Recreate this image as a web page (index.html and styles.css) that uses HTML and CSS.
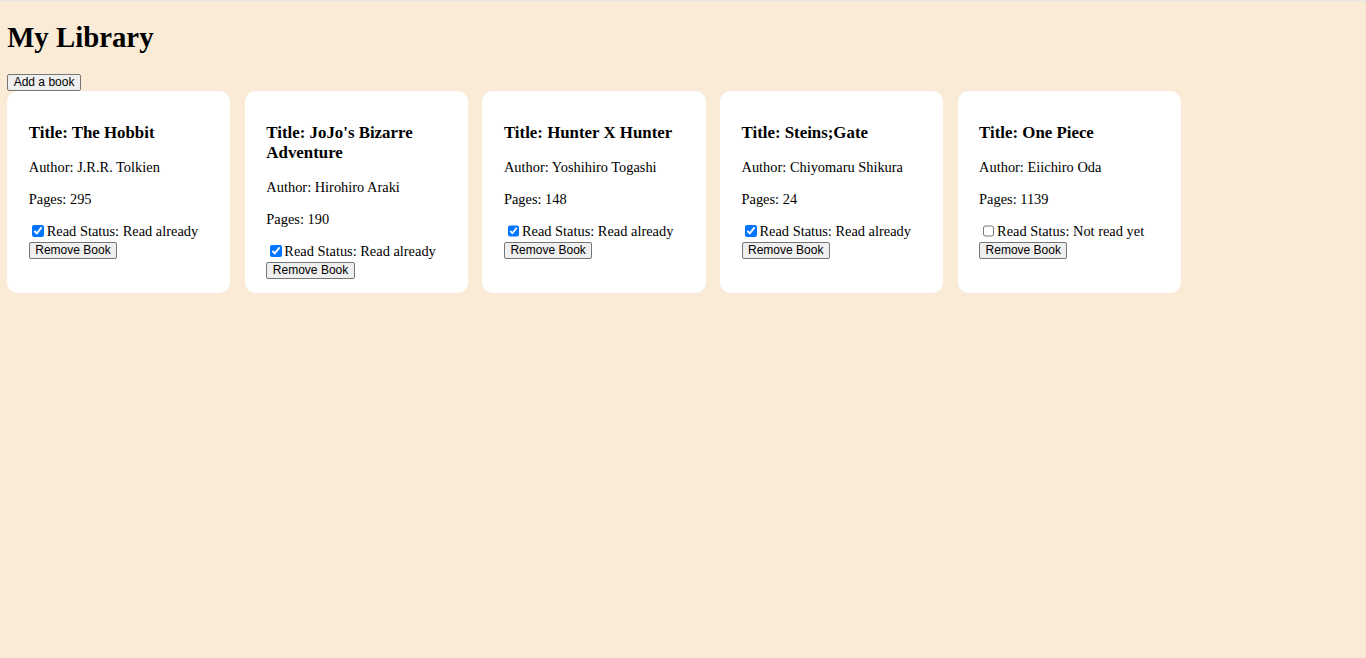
FILE: index.html
```html
<!DOCTYPE html>
<html lang="en">
<head>
<meta charset="utf-8">
<title>My Library</title>
<link rel="stylesheet" href="styles.css">
</head>
<body>
<h1 class="page-title">My Library</h1>
<div class="toolbar"><button class="btn">Add a book</button></div>
<div class="library">
  <div class="card">
    <h3 class="card-title">Title: The Hobbit</h3>
    <p class="card-line">Author: J.R.R. Tolkien</p>
    <p class="card-line">Pages: 295</p>
    <div class="read-status"><input type="checkbox" class="read-check" checked><label>Read Status: Read already</label></div>
    <button class="btn">Remove Book</button>
  </div>
  <div class="card">
    <h3 class="card-title">Title: JoJo's Bizarre Adventure</h3>
    <p class="card-line">Author: Hirohiro Araki</p>
    <p class="card-line">Pages: 190</p>
    <div class="read-status"><input type="checkbox" class="read-check" checked><label>Read Status: Read already</label></div>
    <button class="btn">Remove Book</button>
  </div>
  <div class="card">
    <h3 class="card-title">Title: Hunter X Hunter</h3>
    <p class="card-line">Author: Yoshihiro Togashi</p>
    <p class="card-line">Pages: 148</p>
    <div class="read-status"><input type="checkbox" class="read-check" checked><label>Read Status: Read already</label></div>
    <button class="btn">Remove Book</button>
  </div>
  <div class="card">
    <h3 class="card-title">Title: Steins;Gate</h3>
    <p class="card-line">Author: Chiyomaru Shikura</p>
    <p class="card-line">Pages: 24</p>
    <div class="read-status"><input type="checkbox" class="read-check" checked><label>Read Status: Read already</label></div>
    <button class="btn">Remove Book</button>
  </div>
  <div class="card">
    <h3 class="card-title">Title: One Piece</h3>
    <p class="card-line">Author: Eiichiro Oda</p>
    <p class="card-line">Pages: 1139</p>
    <div class="read-status"><input type="checkbox" class="read-check"><label>Read Status: Not read yet</label></div>
    <button class="btn">Remove Book</button>
  </div>
</div>
</body>
</html>
```

FILE: styles.css
```css
html {
  background: #faebd7;
  border-top: 1px solid #e6e6e6;
}

body {
  margin: 7.2px;
  font-family: "Liberation Serif", "Times New Roman", serif;
  font-size: 14.4px;
  color: #000;
}

.page-title {
  font-size: 28.8px;
  font-weight: bold;
  margin: 12.8px 0 19.3px;
}

.toolbar {
  line-height: 17px;
}

.btn {
  font-family: "Liberation Sans", Arial, sans-serif;
  font-size: 12px;
  line-height: 13px;
  padding: 1px 5.5px;
  border: 1px solid #767676;
  border-radius: 2px;
  background: #efefef;
  color: #000;
  margin: 0;
}

.library {
  display: grid;
  grid-template-columns: repeat(auto-fill, 223.2px);
  gap: 14.4px;
}

.card {
  background: #fff;
  border-radius: 10.8px;
  padding: 14.4px 21.6px;
  box-sizing: border-box;
}

.card-title {
  font-size: 16.85px;
  font-weight: bold;
  margin: 16.85px 0;
}

.card-line {
  margin: 14.4px 0;
}

.read-status {
  line-height: 17px;
}

.read-check {
  width: 11.7px;
  height: 11.7px;
  margin: 2.7px 2.7px 2.7px 3.6px;
  vertical-align: baseline;
}
```
